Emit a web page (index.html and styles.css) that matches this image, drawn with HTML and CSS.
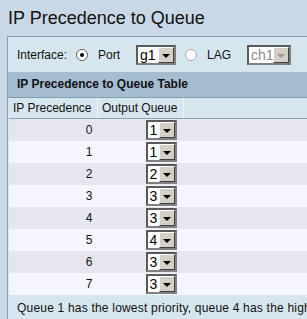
FILE: index.html
```html
<!DOCTYPE html>
<html lang="en">
<head>
    <meta charset="UTF-8">
    <title>IP Precedence to Queue</title>
    <link rel="stylesheet" href="styles.css">
</head>
<body>

    <h1 class="title">IP Precedence to Queue</h1>

    <div class="panel">
        <div class="iface-row">
            <span class="label">Interface:</span>
            <span class="radio checked"></span>
            <span class="label port">Port</span>
            <span class="select">
                <span class="value">g1</span>
                <span class="arrow"></span>
            </span>
            <span class="radio"></span>
            <span class="label lag">LAG</span>
            <span class="select disabled">
                <span class="value">ch1</span>
                <span class="arrow"></span>
            </span>
        </div>

        <div class="table-title">IP Precedence to Queue Table</div>

        <table class="queue-table">
            <thead>
                <tr>
                    <th class="col-prec">IP Precedence</th>
                    <th class="col-queue">Output Queue</th>
                    <th></th>
                </tr>
            </thead>
            <tbody id="queueRows">
                <!-- rows go here -->
            </tbody>
        </table>

        <div class="note">Queue 1 has the lowest priority, queue 4 has the highest priority.</div>
    </div>

    <script>
        // precedence -> queue
        let queues = [1, 1, 2, 3, 3, 4, 3, 3];
        let rows = document.getElementById("queueRows");

        queues.forEach((q, i) => {
            let row = document.createElement("tr");
            row.innerHTML = `
                <td class="num">${i}</td>
                <td><span class="select small"><span class="value">${q}</span><span class="arrow"></span></span></td>
                <td></td>
            `;
            rows.appendChild(row);
        });
    </script>

</body>
</html>
```

FILE: styles.css
```css
body {
    margin: 0;
    background-color: #c8d8e6;
    font-family: "Liberation Sans", Arial, sans-serif;
    font-size: 12px;
    color: #000;
    overflow: hidden;
}
.title {
    margin: 0;
    padding: 8px 8px 0 8px;
    height: 28px;
    font-size: 18px;
    font-weight: normal;
    color: #111;
}
.panel {
    margin-left: 7px;
    border-top: 1px solid #8c9eae;
    border-left: 1px solid #8c9eae;
    background-color: #d6e6ee;
}
.iface-row {
    display: flex;
    align-items: center;
    height: 35px;
    padding-left: 9px;
}
.label {
    font-size: 12px;
    color: #111;
}
.port {
    margin-left: 10px;
    margin-right: 16px;
}
.lag {
    margin-left: 10px;
    margin-right: 16px;
}
.radio {
    display: inline-block;
    box-sizing: border-box;
    width: 12px;
    height: 12px;
    border-radius: 50%;
    background: #fff;
    border: 1px solid #a8a8a8;
    margin-left: 9px;
    position: relative;
}
.radio.checked {
    border-color: #606060;
}
.radio.checked::after {
    content: "";
    position: absolute;
    left: 3px;
    top: 3px;
    width: 4px;
    height: 4px;
    border-radius: 50%;
    background: #000;
}
.select {
    display: inline-flex;
    box-sizing: border-box;
    height: 20px;
    border: 2px solid #5a5a5a;
    border-right-color: #808080;
    border-bottom-color: #808080;
    background: #fff;
}
.select .value {
    display: flex;
    align-items: center;
    padding-left: 2px;
    font-size: 14px;
    color: #000;
    width: 18px;
}
.select .arrow {
    box-sizing: border-box;
    width: 16px;
    background: #d4d0c8;
    border: 1px solid;
    border-color: #fff #404040 #404040 #fff;
    position: relative;
}
.select .arrow::after {
    content: "";
    position: absolute;
    left: 3px;
    top: 6px;
    border-left: 4px solid transparent;
    border-right: 4px solid transparent;
    border-top: 4px solid #000;
}
.select.disabled .value {
    color: #8a8a8a;
    width: 22px;
}
.select.disabled .arrow::after {
    border-top-color: #9a9a9a;
}
.select.small .value {
    width: 9px;
    font-size: 14px;
}
.table-title {
    height: 25px;
    line-height: 25px;
    padding-left: 9px;
    background-color: #a5bdd1;
    border-bottom: 1px solid #7e9cab;
    font-weight: bold;
    font-size: 12px;
    color: #111;
}
.queue-table {
    width: calc(100% + 40px);
    border-collapse: collapse;
    margin-left: 1px;
}
.queue-table th {
    height: 20px;
    padding: 0 4px;
    border-right: 1px solid #eef5f8;
    border-bottom: 1px solid #8fa3ad;
    background-color: #d6e6ee;
    font-weight: normal;
    font-size: 12px;
    text-align: left;
    color: #111;
}
.col-prec {
    width: 80px;
}
.col-queue {
    width: 77px;
}
.queue-table td {
    height: 22px;
    padding: 0;
}
.queue-table tbody tr:nth-child(odd) {
    background-color: #e6e6ef;
}
.queue-table tbody tr:nth-child(even) {
    background-color: #f5f5fd;
}
.num {
    text-align: right;
    padding-right: 5px !important;
    font-size: 12px;
    color: #111;
}
.queue-table td .select {
    margin-left: 48px;
    vertical-align: middle;
}
.note {
    padding: 6px 9px;
    white-space: nowrap;
    letter-spacing: 0.2px;
    font-size: 12px;
    color: #111;
}
```
